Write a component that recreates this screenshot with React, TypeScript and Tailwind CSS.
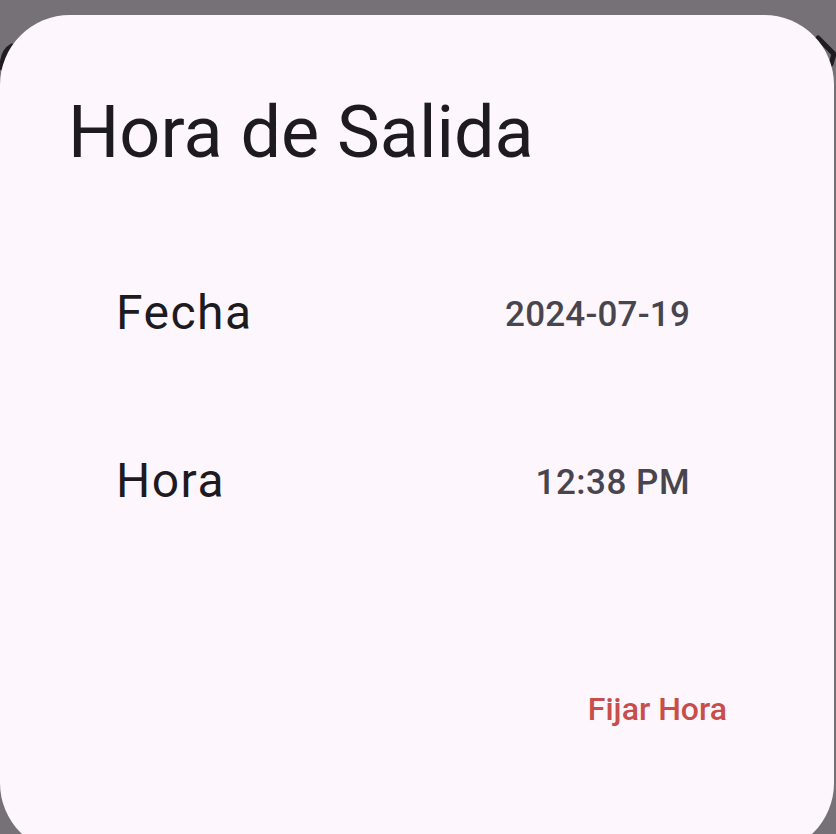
export default function App() {
  return (
    <div className="relative w-[836px] h-[834px] overflow-hidden bg-[#767176] font-['Roboto',sans-serif]">
      {/* bits of the screen behind the dialog */}
      <svg className="absolute left-0 top-0" width="836" height="100" viewBox="0 0 836 100" fill="none">
        <path d="M12 46 C 5 50, 2 58, 2 68" stroke="#1f1d21" strokeWidth="5" strokeLinecap="round" />
        <path d="M818 38 L 834 54 L 831 64" stroke="#1f1d21" strokeWidth="5" strokeLinecap="round" strokeLinejoin="round" />
      </svg>

      <div className="relative mt-[15px] w-[834px] h-[838px] rounded-[70px] bg-[#fdf7fd] pt-[82px] flex flex-col">
        <h1 className="pl-[68px] text-[72px] leading-none text-[#1d1b20] font-normal">
          Hora de Salida
        </h1>

        <div className="mt-[120px] flex flex-col gap-[120px] pl-[116px] pr-[144px]">
          <div className="flex items-center justify-between h-[48px]">
            <span className="text-[48px] leading-none tracking-[1.5px] text-[#1d1b20]">Fecha</span>
            <span className="pt-[3px] text-[35px] leading-none font-medium tracking-[0.2px] text-[#49454f]">
              2024-07-19
            </span>
          </div>
          <div className="flex items-center justify-between h-[48px]">
            <span className="text-[48px] leading-none tracking-[1.5px] text-[#1d1b20]">Hora</span>
            <span className="pt-[3px] text-[35px] leading-none font-medium tracking-[0.5px] text-[#49454f]">
              12:38 PM
            </span>
          </div>
        </div>

        <div className="mt-[188px] flex justify-end pr-[107px]">
          <button className="text-[32px] leading-none font-medium text-[#c94e49]">
            Fijar Hora
          </button>
        </div>
      </div>
    </div>
  );
}
